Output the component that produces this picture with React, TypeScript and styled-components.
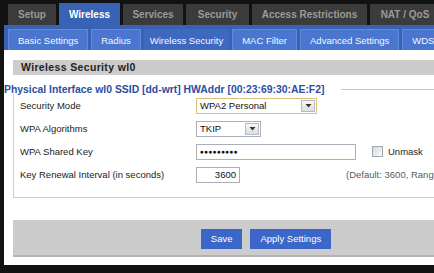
import React from 'react'
import styled, { createGlobalStyle } from 'styled-components'

const GlobalStyle = createGlobalStyle`
  html, body {
    margin: 0;
    padding: 0;
    background: #121212;
  }
  body {
    font-family: "Liberation Sans", Arial, sans-serif;
  }
`

const Page = styled.div`
  width: 434px;
  height: 273px;
  overflow: hidden;
  background: #121212;
`

const Frame = styled.div`
  width: 519px;
`

const MainNav = styled.div`
  display: flex;
  align-items: flex-end;
  gap: 3px;
  height: 25px;
  padding-left: 8px;
  box-sizing: border-box;
`

const MainTab = styled.div<{ $active?: boolean; $width: number }>`
  display: flex;
  align-items: center;
  justify-content: center;
  flex-shrink: 0;
  width: ${(p) => p.$width}px;
  height: ${(p) => (p.$active ? 22 : 21)}px;
  font-size: 10px;
  font-weight: bold;
  white-space: nowrap;
  background: ${(p) => (p.$active ? '#3862b6' : '#3b3b3b')};
  color: ${(p) => (p.$active ? '#ffffff' : '#9a9a9a')};
`

const SubNav = styled.div`
  display: flex;
  align-items: flex-end;
  gap: 3px;
  height: 25px;
  margin-left: 4px;
  padding-left: 4px;
  box-sizing: border-box;
  background: #3862b6;
`

const SubTab = styled.div<{ $active?: boolean }>`
  display: flex;
  align-items: center;
  height: 21px;
  padding: 0 ${(p) => (p.$active ? 5 : 9)}px;
  box-sizing: border-box;
  font-size: 9.5px;
  white-space: nowrap;
  color: #f4f7ff;
  background: ${(p) => (p.$active ? '#3f69bf' : '#4a76cf')};
  border: 1px solid ${(p) => (p.$active ? '#3f69bf' : '#628adb')};
  border-bottom: none;
`

const Content = styled.div`
  margin-left: 4px;
  padding: 10px 0 8px 9px;
  background: #ffffff;
`

const SectionTitle = styled.div`
  height: 15px;
  line-height: 15px;
  padding-left: 8px;
  background: #cccccc;
  color: #222;
  font-size: 10.5px;
  font-weight: bold;
  letter-spacing: 0.35px;
`

const LegendRow = styled.div`
  display: flex;
  align-items: center;
  gap: 17px;
  height: 10px;
  margin: 9px 0 0 -9px;
`

const LegendText = styled.div`
  font-size: 10.4px;
  font-weight: bold;
  color: #2b4ea2;
  white-space: nowrap;
`

const LegendLine = styled.div`
  flex: 1;
  height: 1px;
  background: #c8c8c8;
`

const FieldBox = styled.div`
  border: 1px solid #cdcdcd;
  border-top: none;
  padding: 0 0 11px 6px;
`

const Row = styled.div`
  display: flex;
  align-items: center;
  height: 23px;
`

const Label = styled.div`
  width: 176px;
  flex-shrink: 0;
  font-size: 9.5px;
  color: #222;
`

const Select = styled.div<{ $width: number; $focus?: boolean }>`
  display: flex;
  align-items: center;
  width: ${(p) => p.$width}px;
  height: 16px;
  box-sizing: border-box;
  padding-left: 3px;
  border: 1px solid ${(p) => (p.$focus ? '#e0bf7c' : '#a9b0b9')};
  background: #fff;
  font-size: 9.5px;
  color: #111;
`

const SelectValue = styled.span`
  flex: 1;
`

const DropButton = styled.div`
  display: flex;
  align-items: center;
  justify-content: center;
  width: 12px;
  height: 10px;
  margin-right: 1px;
  border: 1px solid #b7bcc3;
  background: linear-gradient(#f7f7f7, #dadde0);
`

const TextInput = styled.div<{ $width: number; $align?: string }>`
  display: flex;
  align-items: center;
  justify-content: ${(p) => (p.$align === 'right' ? 'flex-end' : 'flex-start')};
  width: ${(p) => p.$width}px;
  height: 16px;
  box-sizing: border-box;
  padding: 0 3px;
  border: 1px solid #a9b0b9;
  background: #fff;
  font-size: 9.5px;
  color: #111;
`

const Dots = styled.span`
  font-size: 6.5px;
  letter-spacing: 0.3px;
`

const CheckBox = styled.div`
  width: 11px;
  height: 11px;
  margin-left: 16px;
  box-sizing: border-box;
  border: 1px solid #9ea6b0;
  background: linear-gradient(135deg, #d8d8d8, #fbfbfb);
`

const CheckLabel = styled.span`
  margin-left: 5px;
  font-size: 9.5px;
  color: #222;
`

const Hint = styled.span`
  margin-left: 106px;
  font-size: 9.5px;
  color: #5a5a5a;
  white-space: nowrap;
`

const ButtonBar = styled.div`
  display: flex;
  align-items: center;
  justify-content: center;
  gap: 8px;
  height: 33px;
  padding-top: 2px;
  margin-top: 22px;
  background: #cccccc;
  border-bottom: 2px solid #b3b3b3;
  box-sizing: content-box;
`

const Button = styled.button`
  height: 20px;
  padding: 0 10px;
  border: none;
  background: #3b67c8;
  color: #fff;
  font-family: "Liberation Sans", Arial, sans-serif;
  font-size: 9.5px;
`

const Arrow = () => (
  <svg width="7" height="5" viewBox="0 0 7 5">
    <path d="M0.5 1 L6.5 1 L3.5 4.5 Z" fill="#333" />
  </svg>
)

const mainTabs = [
  { label: 'Setup', width: 48 },
  { label: 'Wireless', width: 61 },
  { label: 'Services', width: 60 },
  { label: 'Security', width: 63 },
  { label: 'Access Restrictions', width: 115 },
  { label: 'NAT / QoS', width: 70 },
]
const subTabs = ['Basic Settings', 'Radius', 'Wireless Security', 'MAC Filter', 'Advanced Settings', 'WDS']

export default function App() {
  return (
    <Page>
      <GlobalStyle />
      <Frame>
        <MainNav>
          {mainTabs.map((t) => (
            <MainTab key={t.label} $width={t.width} $active={t.label === 'Wireless'}>{t.label}</MainTab>
          ))}
        </MainNav>
        <SubNav>
          {subTabs.map((t) => (
            <SubTab key={t} $active={t === 'Wireless Security'}>{t}</SubTab>
          ))}
        </SubNav>

        <Content>
          <SectionTitle>Wireless Security wl0</SectionTitle>
          <LegendRow>
            <LegendText>Physical Interface wl0 SSID [dd-wrt] HWAddr [00:23:69:30:AE:F2]</LegendText>
            <LegendLine />
          </LegendRow>
          <FieldBox>
            <Row>
              <Label>Security Mode</Label>
              <Select $width={121} $focus>
                <SelectValue>WPA2 Personal</SelectValue>
                <DropButton><Arrow /></DropButton>
              </Select>
            </Row>
            <Row>
              <Label>WPA Algorithms</Label>
              <Select $width={65}>
                <SelectValue>TKIP</SelectValue>
                <DropButton><Arrow /></DropButton>
              </Select>
            </Row>
            <Row>
              <Label>WPA Shared Key</Label>
              <TextInput $width={160}>
                <Dots>●●●●●●●●●</Dots>
              </TextInput>
              <CheckBox />
              <CheckLabel>Unmask</CheckLabel>
            </Row>
            <Row>
              <Label>Key Renewal Interval (in seconds)</Label>
              <TextInput $width={44} $align="right">3600</TextInput>
              <Hint>(Default: 3600, Range: 1 - 99999)</Hint>
            </Row>
          </FieldBox>

          <ButtonBar>
            <Button>Save</Button>
            <Button>Apply Settings</Button>
          </ButtonBar>
        </Content>
      </Frame>
    </Page>
  )
}
